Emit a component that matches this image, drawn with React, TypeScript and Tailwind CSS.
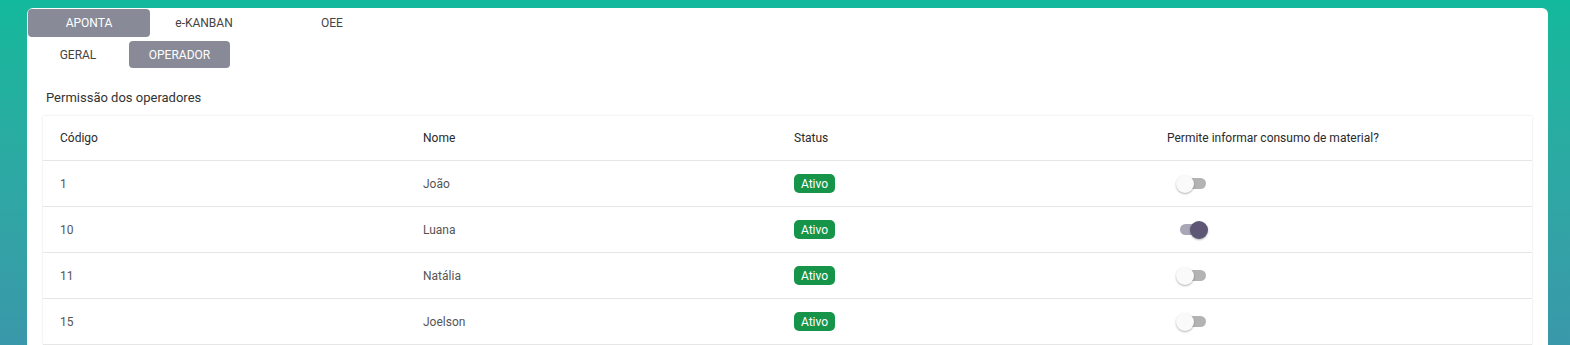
import React from 'react';

const rows = [
  { codigo: '1', nome: 'João', on: false },
  { codigo: '10', nome: 'Luana', on: true },
  { codigo: '11', nome: 'Natália', on: false },
  { codigo: '15', nome: 'Joelson', on: false },
];

function Toggle({ on }: { on: boolean }) {
  return (
    <div className="relative w-[32px] h-[20px] ml-[9px] flex items-center">
      <div className={`absolute left-[4px] w-[26px] h-[11px] rounded-full ${on ? 'bg-[#a9a6b7]' : 'bg-[#b3b3b3]'}`} />
      <div
        className={`absolute top-[1px] w-[18px] h-[18px] rounded-full shadow-[0_1px_2px_rgba(0,0,0,0.3)] ${
          on ? 'left-[14px] bg-[#5d5674]' : 'left-0 bg-[#fafafa]'
        }`}
      />
    </div>
  );
}

export default function App() {
  return (
    <div className="w-[1570px] h-[345px] overflow-hidden bg-gradient-to-b from-[#12b99b] to-[#3a98aa] pt-[8px] pl-[27px] pr-[22px] font-['Roboto',sans-serif]">
      <div className="bg-white rounded-t-md h-[400px] pl-[1px] pt-[1px]">
        <div className="flex text-[12px] h-[28px]">
          <div className="w-[122px] flex items-center justify-center rounded bg-[#888a98] text-white">APONTA</div>
          <div className="w-[108px] flex items-center justify-center text-[#444]">e-KANBAN</div>
          <div className="w-[148px] flex items-center justify-center text-[#444]">OEE</div>
        </div>
        <div className="flex gap-[1px] text-[12px] h-[27px] mt-[4px]">
          <div className="w-[100px] flex items-center justify-center text-[#444]">GERAL</div>
          <div className="w-[101px] flex items-center justify-center rounded bg-[#888a98] text-white">OPERADOR</div>
        </div>
        <div className="pl-[18px] pt-[22px] text-[13px] text-[#333] leading-[16px]">Permissão dos operadores</div>
        <div className="ml-[15px] mr-[16px] mt-[10px] shadow-[0_0_2px_rgba(0,0,0,0.12)]">
          <div className="grid grid-cols-[364px_371px_373px_1fr] h-[45px] items-center border-b border-[#e6e6e6] text-[12px] text-[#2a2a2a]">
            <div className="pl-[17px]">Código</div>
            <div className="pl-[16px]">Nome</div>
            <div className="pl-[16px]">Status</div>
            <div className="pl-[16px]">Permite informar consumo de material?</div>
          </div>
          {rows.map((r) => (
            <div key={r.codigo} className="grid grid-cols-[364px_371px_373px_1fr] h-[46px] items-center border-b border-[#e6e6e6] text-[12px] text-[#555]">
              <div className="pl-[17px]">{r.codigo}</div>
              <div className="pl-[16px]">{r.nome}</div>
              <div className="pl-[16px]">
                <span className="inline-flex items-center justify-center w-[41px] h-[19px] rounded-[5px] bg-[#16954a] text-white">Ativo</span>
              </div>
              <div className="pl-[16px]">
                <Toggle on={r.on} />
              </div>
            </div>
          ))}
        </div>
      </div>
    </div>
  );
}
